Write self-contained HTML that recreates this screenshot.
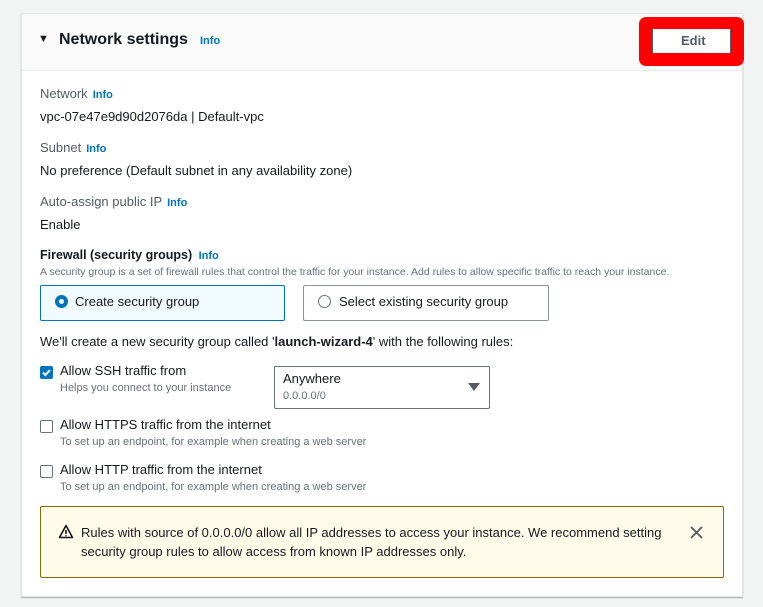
<!DOCTYPE html>
<html><head><meta charset="utf-8"><style>
*{margin:0;padding:0;box-sizing:border-box}
body{width:763px;height:607px;background:#f2f3f3;font-family:"Liberation Sans",sans-serif;color:#16191f;position:relative;overflow:hidden;font-size:13px}
.a{position:absolute;white-space:nowrap}
.info{color:#0073bb;font-weight:bold;font-size:11px;margin-left:5px}
.lbl{color:#545b64;font-size:13px}
.sub{color:#687078;font-size:11px}
.cb{position:absolute;width:13px;height:13px;border:1px solid #687078;border-radius:2px;background:#fff}
</style></head><body>
<div class="a" style="left:21px;top:13px;width:722px;height:584px;background:#fff;border:1px solid #e4e4e4;box-shadow:0 1px 1px rgba(0,0,0,.3)"></div>
<div class="a" style="left:22px;top:14px;width:720px;height:57px;background:#fafafa;border-bottom:1px solid #eaeded"></div>
<div class="a" style="left:38px;top:33px;font-size:11px">▼</div>
<div class="a" style="left:59px;top:31px;font-size:16px;font-weight:bold">Network settings</div>
<div class="a info" style="left:195px;top:35px">Info</div>
<div class="a" style="left:639px;top:17px;width:105px;height:49px;background:#ff0000;border-radius:7px"></div>
<div class="a" style="left:652px;top:29px;width:79px;height:24px;background:#fff;border-left:1px solid #545b64;border-right:1px solid #545b64"></div>
<div class="a" style="left:681px;top:33px;font-weight:bold;color:#545b64;font-size:13px">Edit</div>

<div class="a lbl" style="left:40px;top:86px">Network<span class="info">Info</span></div>
<div class="a" style="left:40px;top:109px">vpc-07e47e9d90d2076da | Default-vpc</div>
<div class="a lbl" style="left:40px;top:140px">Subnet<span class="info">Info</span></div>
<div class="a" style="left:40px;top:163px">No preference (Default subnet in any availability zone)</div>
<div class="a lbl" style="left:40px;top:194px">Auto-assign public IP<span class="info">Info</span></div>
<div class="a" style="left:40px;top:217px">Enable</div>
<div class="a" style="left:40px;top:248px;font-weight:bold;font-size:12.5px">Firewall (security groups) <span class="info" style="margin-left:3px">Info</span></div>
<div class="a sub" style="left:40px;top:266px;font-size:10.5px">A security group is a set of firewall rules that control the traffic for your instance. Add rules to allow specific traffic to reach your instance.</div>

<div class="a" style="left:40px;top:285px;width:245px;height:36px;background:#f1faff;border:1px solid #0073bb;border-radius:2px"></div>
<div class="a" style="left:55px;top:295px;width:13px;height:13px;border-radius:50%;border:4px solid #0073bb;background:#fff"></div>
<div class="a" style="left:75px;top:294px">Create security group</div>
<div class="a" style="left:303px;top:285px;width:246px;height:36px;border:1px solid #879596;border-radius:2px"></div>
<div class="a" style="left:318px;top:295px;width:13px;height:13px;border-radius:50%;border:1px solid #687078"></div>
<div class="a" style="left:339px;top:294px">Select existing security group</div>

<div class="a" style="left:40px;top:334px">We'll create a new security group called '<b>launch-wizard-4</b>' with the following rules:</div>

<div class="cb" style="left:40px;top:366px;background:#0073bb;border-color:#0073bb"></div>
<svg class="a" style="left:40px;top:366px" width="13" height="13"><path d="M3 6.5l2.5 2.5 4.5-5" stroke="#fff" stroke-width="2" fill="none"/></svg>
<div class="a" style="left:60px;top:363px">Allow SSH traffic from</div>
<div class="a sub" style="left:60px;top:382px">Helps you connect to your instance</div>
<div class="a" style="left:274px;top:366px;width:216px;height:43px;border:1px solid #687078;border-radius:2px"></div>
<div class="a" style="left:283px;top:371px">Anywhere</div>
<div class="a sub" style="left:283px;top:390px">0.0.0.0/0</div>
<svg class="a" style="left:468px;top:383px" width="12" height="9"><path d="M0 0h12L6 8z" fill="#545b64"/></svg>

<div class="cb" style="left:40px;top:420px"></div>
<div class="a" style="left:60px;top:417px">Allow HTTPS traffic from the internet</div>
<div class="a sub" style="left:60px;top:436px">To set up an endpoint, for example when creating a web server</div>
<div class="cb" style="left:40px;top:465px"></div>
<div class="a" style="left:60px;top:462px">Allow HTTP traffic from the internet</div>
<div class="a sub" style="left:60px;top:481px">To set up an endpoint, for example when creating a web server</div>

<div class="a" style="left:40px;top:506px;width:684px;height:72px;background:#fffce9;border:1px solid #8d6605;border-radius:2px"></div>
<svg class="a" style="left:58px;top:524px" width="16" height="15"><path d="M8 1.5L1.5 13.5h13z" stroke="#16191f" stroke-width="1.6" fill="none" stroke-linejoin="round"/><path d="M8 6v4M8 11.2v1" stroke="#16191f" stroke-width="1.6"/></svg>
<div class="a" style="left:81px;top:523px;line-height:19px">Rules with source of 0.0.0.0/0 allow all IP addresses to access your instance. We recommend setting<br>security group rules to allow access from known IP addresses only.</div>
<svg class="a" style="left:690px;top:526px" width="13" height="13"><path d="M1 1l11 11M12 1L1 12" stroke="#545b64" stroke-width="1.8"/></svg>
</body></html>
